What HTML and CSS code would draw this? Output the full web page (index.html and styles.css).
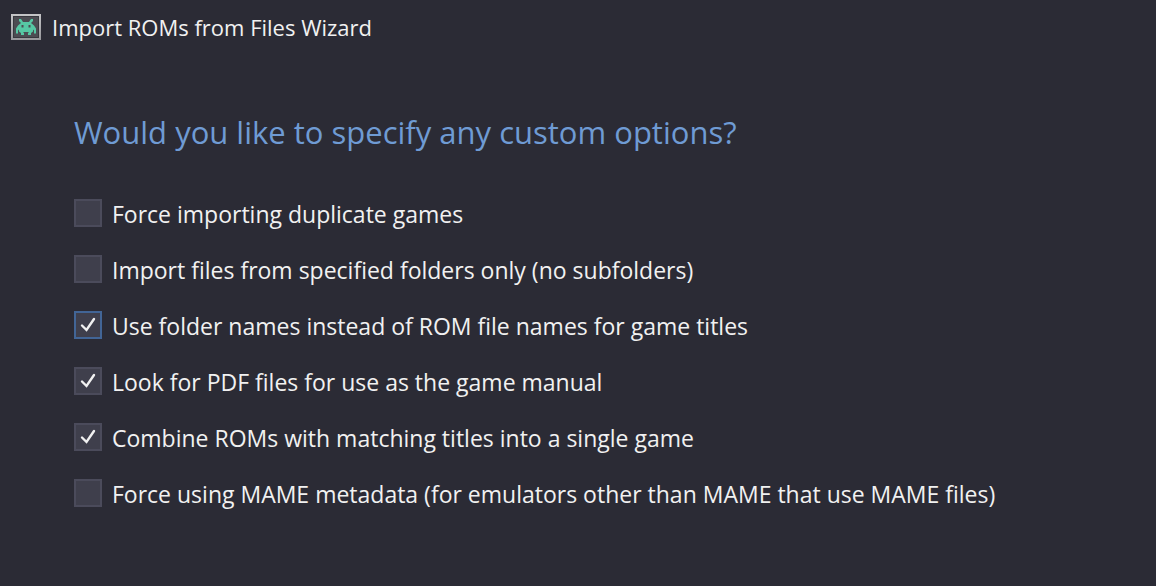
FILE: index.html
```
<!DOCTYPE html>
<html lang="en">
<head>
    <meta charset="utf-8">
    <title>Import ROMs from Files Wizard</title>
    <link rel="stylesheet" href="styles.css">
</head>
<body>
    <header class="titlebar">
        <svg class="app-icon" width="30" height="26" viewBox="0 0 30 26">
            <defs>
                <linearGradient id="frame" x1="0" y1="0" x2="0" y2="1">
                    <stop offset="0" stop-color="#c4c4c6"/>
                    <stop offset="1" stop-color="#98989c"/>
                </linearGradient>
            </defs>
            <rect x="1" y="1" width="28" height="24" fill="#4c4c52" stroke="url(#frame)" stroke-width="2"/>
            <rect x="2.5" y="2.5" width="25" height="21" fill="none" stroke="#38383e"/>
            <!-- invader: body, antennae, claws and feet -->
            <path d="M8 5h2l2 3h6l2-3h2v2l-2 2 3 2.500 2 3v5h-2v-3l-1-1v2l-2 1.500v2h-3v-2l1-1h-6l1 1v2h-3v-2L8 17.500v-2l-1 1v3H5v-5l2-3L10 9 8 7zM10.500 11v2.500h2V11zM17.500 11v2.500h2V11z" fill="#56c8a4" fill-rule="evenodd"/>
        </svg>
        <span class="app-title">Import ROMs from Files Wizard</span>
    </header>
    <main class="page">
        <h1>Would you like to specify any custom options?</h1>
        <form class="options">
            <label class="option"><input type="checkbox"><span>Force importing duplicate games</span></label>
            <label class="option"><input type="checkbox"><span>Import files from specified folders only (no subfolders)</span></label>
            <label class="option"><input type="checkbox" class="active" checked><span>Use folder names instead of ROM file names for game titles</span></label>
            <label class="option"><input type="checkbox" checked><span>Look for PDF files for use as the game manual</span></label>
            <label class="option"><input type="checkbox" checked><span>Combine ROMs with matching titles into a single game</span></label>
            <label class="option"><input type="checkbox"><span>Force using MAME metadata (for emulators other than MAME that use MAME files)</span></label>
        </form>
    </main>
</body>
</html>
```
FILE: styles.css
```
body {
    margin: 0;
    background-color: #2b2b35;
    color: #f1f1f1;
    font-family: "Open Sans", "Noto Sans", sans-serif;
}

.titlebar {
    display: flex;
    align-items: center;
    gap: 11px;
    height: 54px;
    padding: 0 11px;
    font-size: 22px;
}

.page {
    padding: 56px 74px;
}

h1 {
    margin: 0;
    color: #6f9bd4;
    font-size: 31px;
    font-weight: 400;
    line-height: 44px;
}

.options {
    display: flex;
    flex-direction: column;
    gap: 24px;
    margin-top: 44px;
}

.option {
    display: flex;
    align-items: flex-start;
    gap: 10px;
    font-size: 23px;
    line-height: 32px;
}

.option input {
    appearance: none;
    flex: none;
    width: 28px;
    height: 28px;
    margin: 1px 0 0;
    border: 2px solid #4b4b5b;
    background-color: #3f3f4c;
}

.option input.active {
    border-color: #426596;
}

.option input:checked {
    background-image: url("data:image/svg+xml,%3Csvg xmlns='http://www.w3.org/2000/svg' viewBox='0 0 24 24'%3E%3Cpath d='M6 12.500L10.500 17L18 6' fill='none' stroke='%23f1f1f1' stroke-width='2.400' stroke-linecap='round'/%3E%3C/svg%3E");
}
```
